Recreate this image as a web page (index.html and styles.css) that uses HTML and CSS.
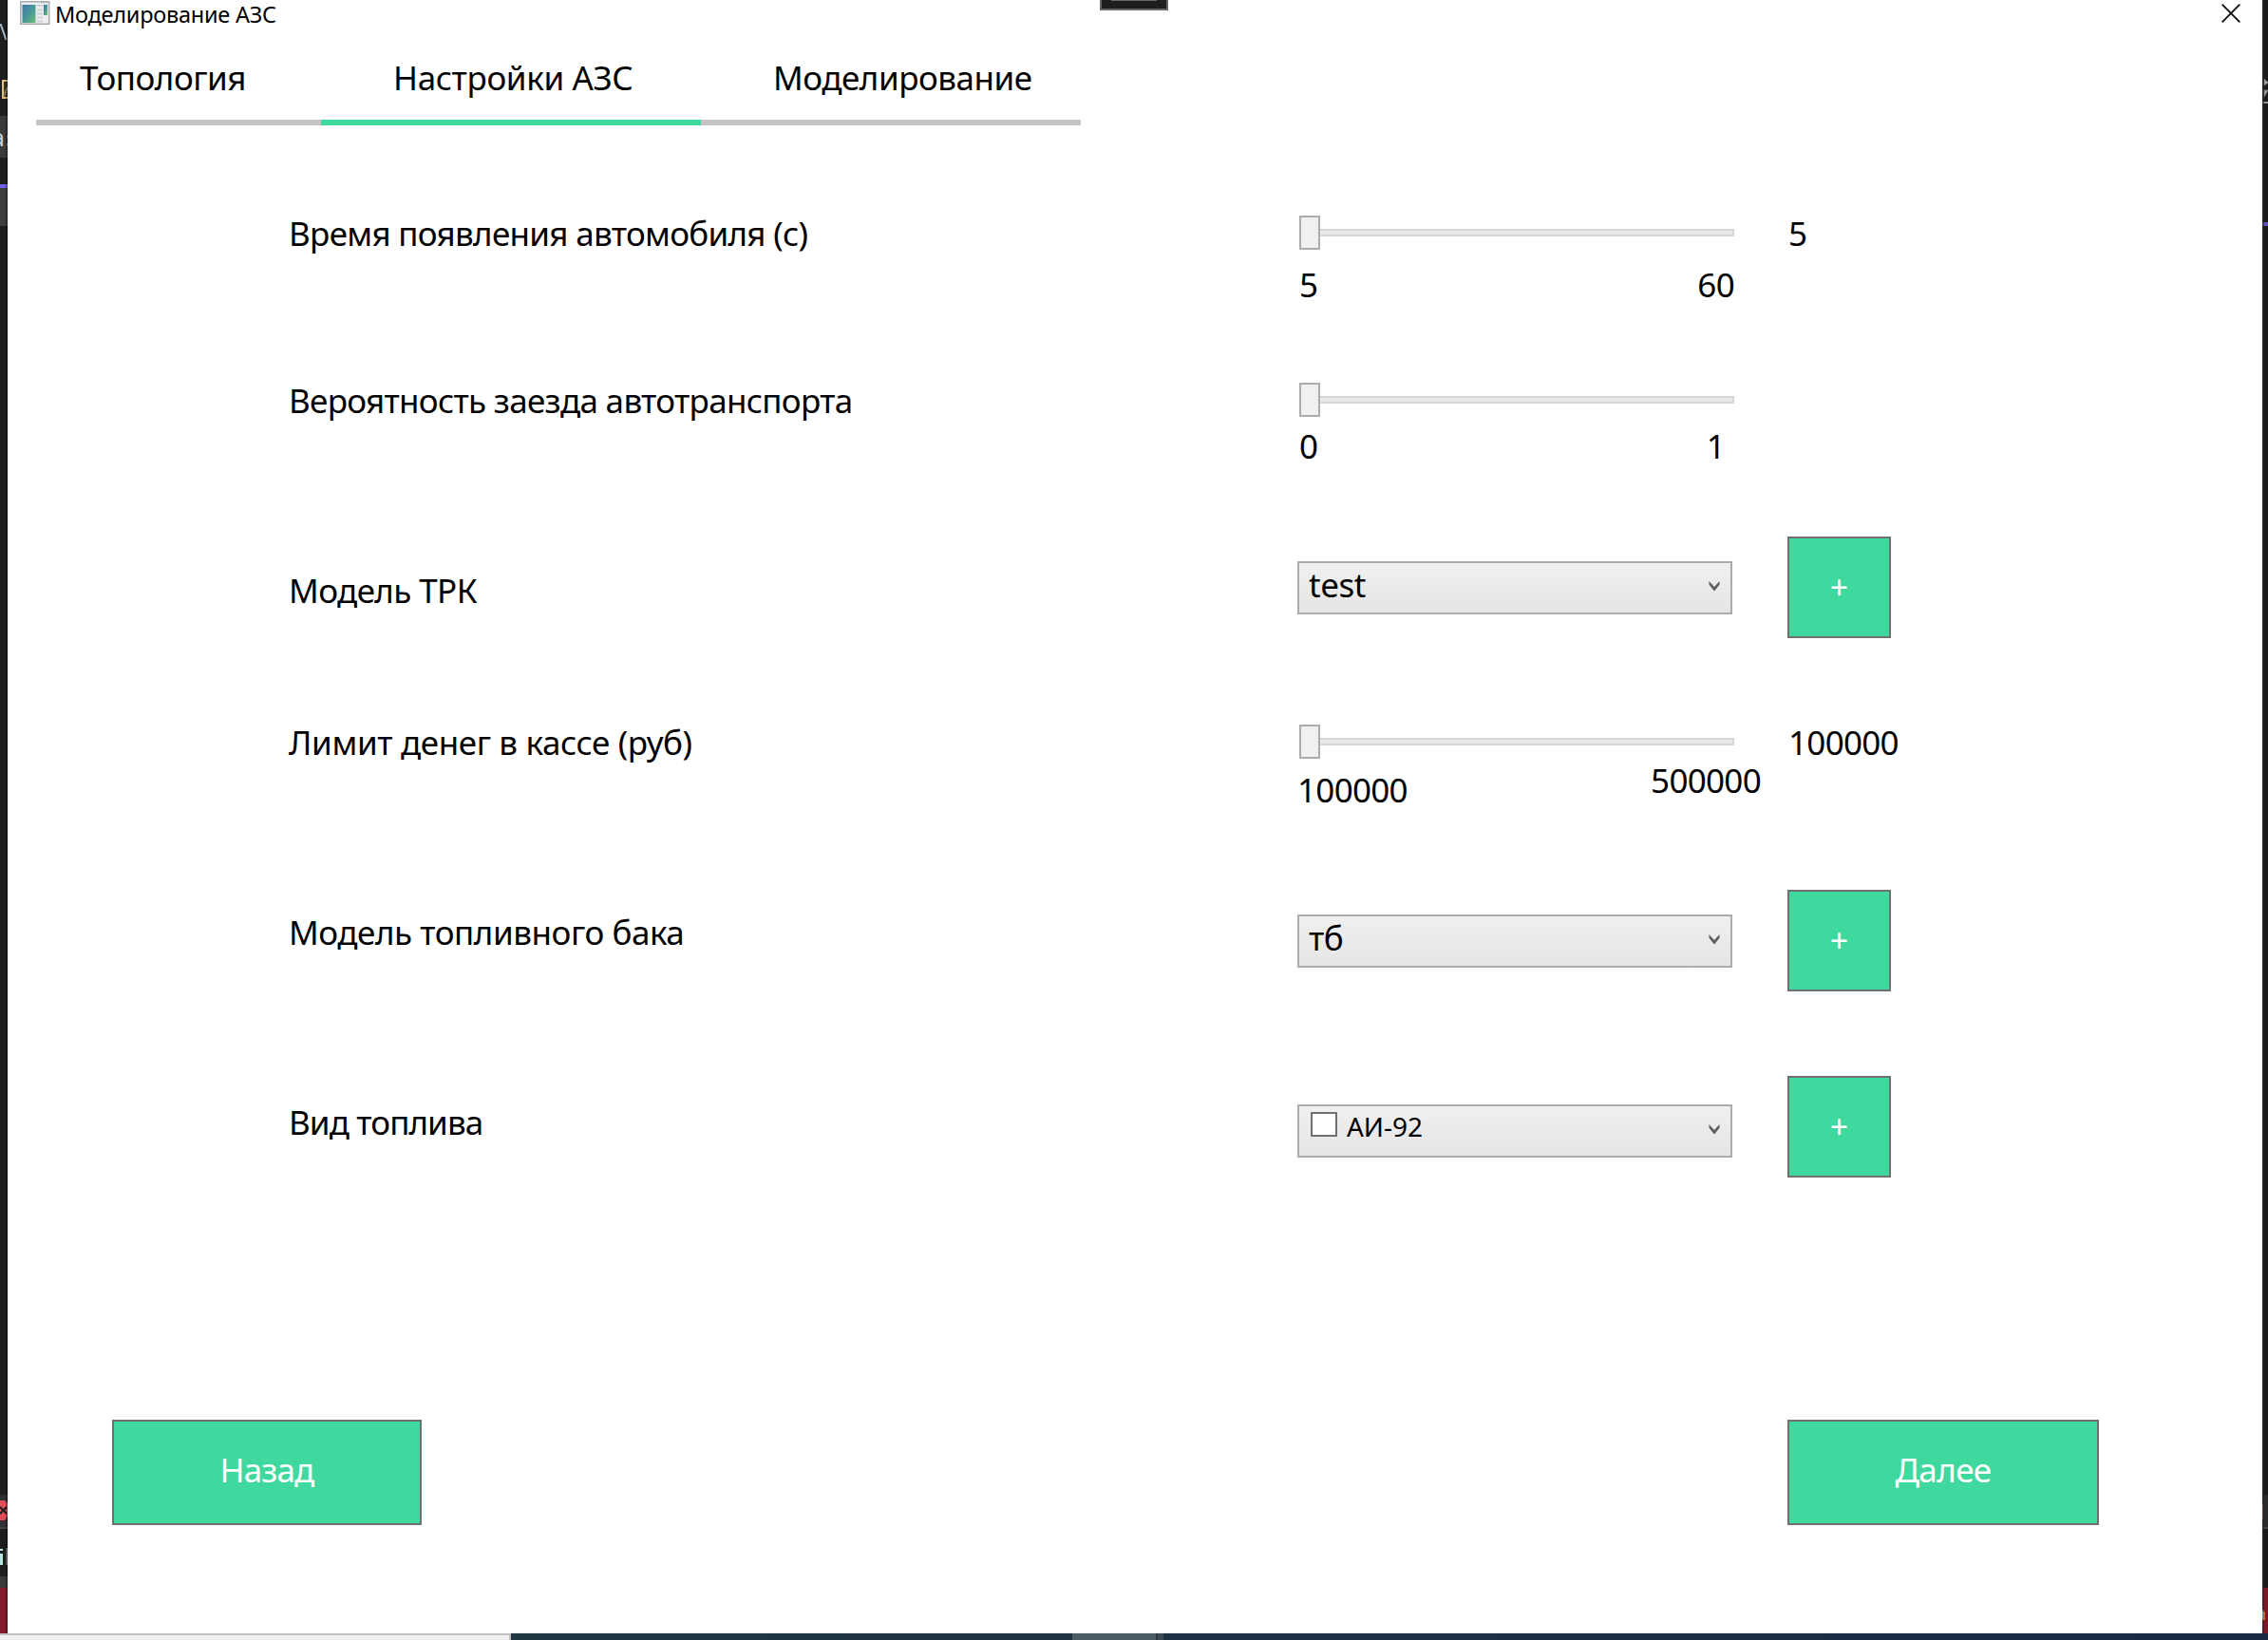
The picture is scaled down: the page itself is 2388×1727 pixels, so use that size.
FILE: index.html
```html
<!DOCTYPE html>
<html lang="ru">
<head>
<meta charset="utf-8">
<title>Моделирование АЗС</title>
<link rel="stylesheet" href="styles.css">
</head>
<body>
<div class="desktop">
  <svg class="edge" width="8" height="1720" viewBox="0 0 8 1720">
    <rect width="8" height="1720" fill="#1e1e1e"/>
    <path d="M0.500 25L6.500 42" stroke="#a9b9c9" stroke-width="2"/>
    <path d="M8 85H3V103H8" fill="#3a3427" stroke="#e0c080" stroke-width="2"/>
    <path d="M4 101L8 92" stroke="#8d7c59" stroke-width="2"/>
    <rect y="122" width="8" height="44" fill="#3a3a3a"/>
    <text class="edge-text" x="-9.500" y="154">as</text>
    <rect y="194" width="8" height="4" fill="#7160e8"/>
    <rect y="198" width="8" height="40" fill="#3d3d3d"/>
    <rect y="1574" width="8" height="34" fill="#303033"/>
    <path d="M0 1580H5L8 1583V1597L5 1601H0Z" fill="#e04c5a"/>
    <path d="M0 1587L7 1594M0 1594L7 1587" stroke="#1e1e1e" stroke-width="2"/>
    <rect y="1608" width="8" height="2" fill="#444"/>
    <path d="M1.500 1631V1633M1.500 1636V1648" stroke="#b5e6e0" stroke-width="3"/>
    <rect x="6" y="1630" width="2" height="18" fill="#68717c"/>
    <rect y="1660" width="8" height="12" fill="#3a3a3a"/>
    <rect y="1672" width="8" height="48" fill="#861b2d"/>
    <rect x="6" width="2" height="1720" fill="#000" opacity=".3"/>
  </svg>

  <main class="window">
    <header class="titlebar">
      <svg class="app-icon" width="32" height="26" viewBox="0 0 32 26">
        <defs><linearGradient id="pane" x1="0" y1="0" x2="1" y2="1"><stop offset="0" stop-color="#4775a8"/><stop offset=".5" stop-color="#46979a"/><stop offset="1" stop-color="#72bd75"/></linearGradient></defs>
        <rect x=".75" y="1.750" width="30" height="23.500" fill="#eceef0" stroke="#a9adb0" stroke-width="1.500"/>
        <path d="M22 2.500H29" stroke="#bbb" stroke-width="1.500"/>
        <rect x="2.500" y="5" width="14" height="19" fill="url(#pane)"/>
        <path d="M18 6H24M18 10.500H24M18 14.500H24M18 18.500H24M18 22.500H24" stroke="#d0d2d5" stroke-width="2"/>
        <rect x="25" y="5" width="4" height="11" fill="url(#pane)"/>
      </svg>
      <h1 class="title">Моделирование АЗС</h1>
      <svg class="close" width="20" height="20" viewBox="0 0 20 20"><path d="M.7.7L19.300 19.300M19.300.7L.7 19.300" fill="none" stroke="#111" stroke-width="1.900"/></svg>
    </header>

    <nav class="tabs">
      <a class="tab tab-topology"><span>Топология</span></a>
      <a class="tab tab-settings active"><span>Настройки АЗС</span></a>
      <a class="tab tab-model"><span>Моделирование</span></a>
    </nav>

    <section class="form">
      <div class="label">Время появления автомобиля (с)</div>
      <div class="control">
        <div class="slider"><div class="thumb"></div><div class="track"></div></div>
        <div class="ticks ticks-time"><span>5</span><span>60</span></div>
      </div>
      <div class="value">5</div>

      <div class="label">Вероятность заезда автотранспорта</div>
      <div class="control">
        <div class="slider"><div class="thumb"></div><div class="track"></div></div>
        <div class="ticks ticks-chance"><span>0</span><span>1</span></div>
      </div>
      <div class="value"></div>

      <div class="label label-pump">Модель ТРК</div>
      <div class="combo"><span>test</span><svg class="chevron" width="12" height="11" viewBox="0 0 12 11"><path d="M.5 0V3.800L6 10.500L11.500 3.800V0L6 6Z" fill="#606060"/></svg></div>
      <button class="button add">+</button>

      <div class="label label-limit">Лимит денег в кассе (руб)</div>
      <div class="control">
        <div class="slider"><div class="thumb"></div><div class="track"></div></div>
        <div class="ticks ticks-money"><span class="money-min">100000</span><span>500000</span></div>
      </div>
      <div class="value">100000</div>

      <div class="label label-tank">Модель топливного бака</div>
      <div class="combo"><span>тб</span><svg class="chevron" width="12" height="11" viewBox="0 0 12 11"><path d="M.5 0V3.800L6 10.500L11.500 3.800V0L6 6Z" fill="#606060"/></svg></div>
      <button class="button add">+</button>

      <div class="label label-fuel">Вид топлива</div>
      <div class="combo combo-fuel"><i class="checkbox"></i><span class="fuel">АИ-92</span><svg class="chevron" width="12" height="11" viewBox="0 0 12 11"><path d="M.5 0V3.800L6 10.500L11.500 3.800V0L6 6Z" fill="#606060"/></svg></div>
      <button class="button add">+</button>
    </section>

    <footer class="actions">
      <button class="button back">Назад</button>
      <button class="button next">Далее</button>
    </footer>
  </main>

  <svg class="edge" width="6" height="1720" viewBox="0 0 6 1720">
    <rect width="6" height="1720" fill="#1b1b1a"/>
    <path d="M0 88H2M2 83L6 87L2 90ZM0 96H2M2 95H6L2 102Z" fill="#aaa" stroke="#777"/>
    <rect y="107" width="6" height="2" fill="#999"/>
    <rect y="234" width="6" height="4" fill="#6653c0"/>
    <rect y="1574" width="6" height="34" fill="#2b2b2b"/>
    <rect y="1584" width="1" height="16" fill="#857451"/>
    <rect y="1608" width="6" height="2" fill="#444"/>
    <rect y="1672" width="6" height="48" fill="#7a1829"/>
    <rect width="2" height="1720" fill="#2b2526" opacity=".6"/>
    <path d="M.5 1695V1706" stroke="#748699"/>
    <path d="M2 1697V1706" stroke="#cf6125" stroke-width="2"/>
  </svg>
</div>
<div class="taskbar"><div class="search"></div><div class="task"></div><div class="task-edge"></div></div>
<div class="notch"></div>
</body>
</html>
```
FILE: styles.css
```css
* { box-sizing: border-box; }
body {
  margin: 0;
  width: 2388px;
  height: 1727px;
  overflow: hidden;
  background: #1e1e1e;
  color: #000;
  font: 35px/48px "Noto Sans", "Open Sans", sans-serif;
}
.desktop { display: flex; height: 1720px; }
.edge { flex: none; display: block; }
.edge-text { font: 24px "DejaVu Sans Mono", monospace; fill: #c5ccd5; }
.window { width: 2374px; height: 1720px; background: #fff; display: flex; flex-direction: column; }

.titlebar { display: flex; align-items: flex-start; height: 56px; padding-left: 13px; }
.app-icon { flex: none; }
.title { margin: 0 auto 0 5px; font-size: 23.500px; line-height: 30px; font-weight: 400; white-space: nowrap; letter-spacing: -.24px; }
.close { margin: 4px 23px 0 0; }

.tabs { display: flex; width: 1100px; height: 76px; margin-left: 30px; }
.tab { display: flex; width: 400px; height: 76px; border-bottom: 6px solid #c4c4c4; padding-top: 2px; white-space: nowrap; }
.tab-topology { width: 300px; padding-left: 46px; letter-spacing: -.5px; }
.tab-settings { padding-left: 76px; letter-spacing: -.37px; }
.tab-model { padding-left: 76px; letter-spacing: -.47px; }
.active { border-color: #3fd9a0; }

.form {
  display: grid;
  grid-template-columns: 1062px 516px 300px;
  grid-template-rows: 176px 168px 192px 180px 196px 107px;
  margin: 89px 0 0 296px;
  align-items: start;
}
.label { white-space: nowrap; letter-spacing: -.7px; margin-top: 1px; }
.label-pump { margin-top: 33px; letter-spacing: -.6px; }
.label-limit { letter-spacing: -.38px; }
.label-tank { margin-top: 21px; letter-spacing: -.45px; }
.label-fuel { margin-top: 25px; letter-spacing: -.9px; }
.control { width: 460px; padding: 6px 0 0 2px; }
.slider { display: flex; align-items: center; height: 36px; }
.thumb { width: 22px; height: 36px; background: #f0f0f0; border: 2px solid #acacac; }
.track { flex: 1; height: 8px; background: #e7eaea; border: 2px solid #d6d6d6; border-left: 0; }
.ticks { display: flex; justify-content: space-between; letter-spacing: -.7px; }
.ticks-time { margin-top: 13px; }
.ticks-chance { margin-top: 7px; padding-right: 10px; }
.ticks-money { margin: -1px -28px 0 -2px; }
.money-min { padding-top: 10px; }
.value { padding-left: 1px; margin-top: 1px; letter-spacing: -.7px; }

.combo {
  display: flex;
  width: 458px;
  height: 56px;
  margin-top: 26px;
  padding-left: 10px;
  border: 2px solid #acacac;
  background: linear-gradient(#f0f0f0, #e5e5e5);
}
.combo span { margin-top: -1px; letter-spacing: -.5px; }
.combo-fuel { margin-top: 30px; padding-left: 12px; }
.combo .fuel { margin: -3px 0 0 10px; font-size: 28px; letter-spacing: 0; }
.checkbox { width: 28px; height: 26px; margin-top: 6px; border: 2px solid #707070; background: #fff; }
.chevron { margin: 19px 11px 0 auto; }

.button {
  margin: 0;
  padding: 0;
  border: 2px solid #707070;
  border-radius: 0;
  background: #3fd9a0;
  color: #fff;
  font: inherit;
}
.add { width: 109px; height: 107px; padding-bottom: 2px; font-size: 34px; }

.actions { display: flex; justify-content: space-between; margin: 255px 172px 0 110px; }
.back { width: 326px; height: 111px; padding-bottom: 5px; letter-spacing: -.9px; }
.next { width: 328px; height: 111px; padding-bottom: 5px; letter-spacing: -.6px; }

.taskbar { display: flex; height: 7px; background: linear-gradient(90deg, #203c43, #1d3044 60%, #172a43); }
.search { width: 538px; border: solid #c0c0c0; border-width: 2px 2px 0 0; background: #f0f0f0; }
.task { width: 88px; margin-left: 591px; background: #4c5c64; }
.task-edge { width: 8px; background: #3d4a52; border-left: 2px solid #2c3940; }

/* Debugger toolbar handle floating over the top edge of the window */
.notch {
  position: absolute;
  top: 0;
  left: 1158px;
  width: 72px;
  height: 11px;
  border: 2px solid #666;
  border-top: 0;
  background: linear-gradient(#666, #666) 10px 0 / 48px 1px no-repeat #1e1e1e;
}
```
